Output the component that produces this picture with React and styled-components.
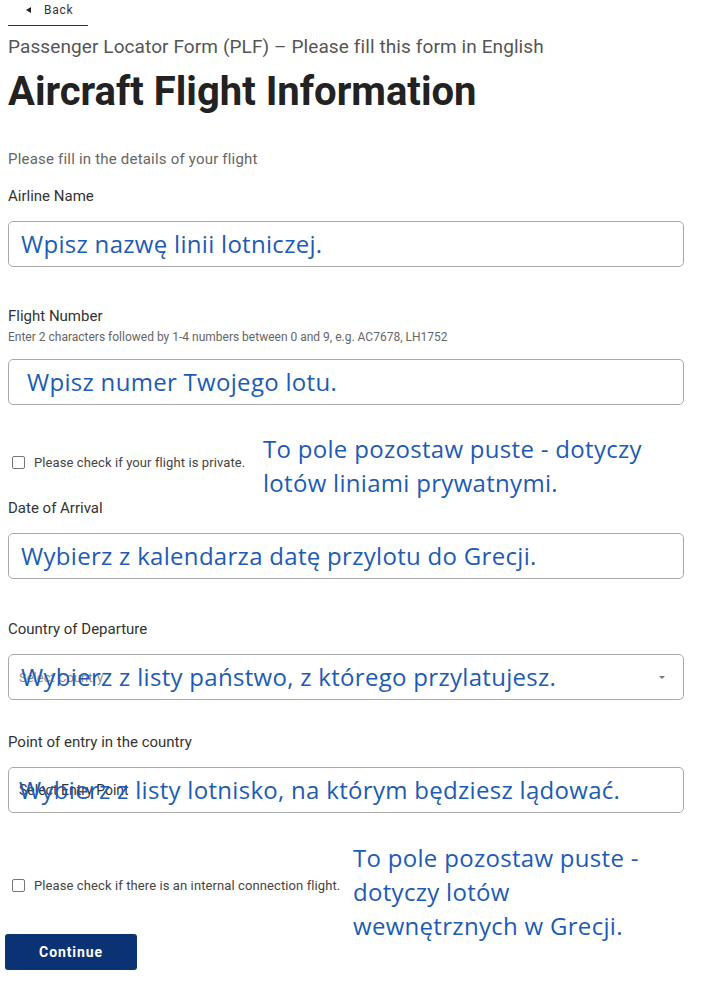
import styled, { createGlobalStyle } from "styled-components";

const GlobalStyle = createGlobalStyle`
  html, body {
    margin: 0;
    padding: 0;
    background: #ffffff;
  }
  body {
    font-family: Roboto, "Liberation Sans", sans-serif;
    color: #333333;
  }
`;

const Page = styled.div`
  width: 676px;
  padding: 0 8px 28px;
`;

const BackLink = styled.a`
  display: flex;
  align-items: center;
  gap: 13px;
  width: 80px;
  height: 26px;
  box-sizing: border-box;
  padding: 0 0 6px 18px;
  border-bottom: 1px solid #333;
  font-size: 12px;
  letter-spacing: 0.7px;
  color: #333;
  text-decoration: none;
`;

const Arrow = styled.span`
  width: 0;
  height: 0;
  border-top: 3.5px solid transparent;
  border-bottom: 3.5px solid transparent;
  border-right: 5px solid #222;
`;

const Subtitle = styled.p`
  margin: 9px 0 0;
  font-size: 19px;
  line-height: 24px;
  letter-spacing: 0.1px;
  color: #555;
`;

const Title = styled.h1`
  margin: 9px 0 0;
  font-size: 40px;
  line-height: 48px;
  font-weight: 700;
  color: #222;
`;

const Intro = styled.p`
  margin: 33px 0 0;
  font-size: 15px;
  line-height: 20px;
  letter-spacing: 0.2px;
  color: #666;
`;

const Field = styled.div`
  margin-top: ${(p) => p.$gap}px;
`;

const Label = styled.div`
  font-size: 15px;
  line-height: 20px;
  font-weight: 400;
  color: #333;
`;

const Hint = styled.div`
  margin-top: 4px;
  font-size: 12px;
  line-height: 14px;
  color: #666;
`;

const InputBox = styled.div`
  position: relative;
  margin-top: 15px;
  height: 46px;
  box-sizing: border-box;
  border: 1px solid #a9a9a9;
  border-radius: 5px;
  display: flex;
  align-items: center;
  padding: 0 10px;
`;

const Placeholder = styled.span`
  font-size: ${(p) => p.$size}px;
  color: ${(p) => p.$color};
`;

const Caret = styled.span`
  margin-left: auto;
  margin-right: 8px;
  width: 0;
  height: 0;
  border-left: 3.5px solid transparent;
  border-right: 3.5px solid transparent;
  border-top: 3.5px solid #777;
`;

const Note = styled.div`
  position: absolute;
  left: ${(p) => p.$left}px;
  top: ${(p) => p.$top}px;
  font-family: "Open Sans", "Noto Sans", sans-serif;
  font-size: 24px;
  line-height: 34px;
  letter-spacing: 0.3px;
  color: #1d5bb5;
  white-space: nowrap;
`;

const InlineNote = styled(Note)`
  top: 50%;
  transform: translateY(-50%);
`;

const CheckRow = styled.label`
  position: relative;
  display: flex;
  align-items: center;
  gap: 9px;
  height: 20px;
  margin-top: ${(p) => p.$gap}px;
  padding-left: 4px;
  font-size: 13px;
  letter-spacing: 0.1px;
  color: #444;
`;

const Box = styled.span`
  width: 13px;
  height: 13px;
  box-sizing: border-box;
  border: 1px solid #767676;
  border-radius: 2px;
  background: #fff;
`;

const Button = styled.button`
  margin: 39px 0 0 -3px;
  width: 132px;
  height: 36px;
  border: none;
  border-radius: 3px;
  background: #0b3273;
  color: #fff;
  font-family: Roboto, "Liberation Sans", sans-serif;
  font-size: 14px;
  font-weight: 700;
  letter-spacing: 0.9px;
`;

export default function App() {
  return (
    <>
      <GlobalStyle />
      <Page>
        <BackLink href="#">
          <Arrow />
          Back
        </BackLink>
        <Subtitle>Passenger Locator Form (PLF) – Please fill this form in English</Subtitle>
        <Title>Aircraft Flight Information</Title>
        <Intro>Please fill in the details of your flight</Intro>

        <Field $gap={17}>
          <Label>Airline Name</Label>
          <InputBox>
            <InlineNote $left={12}>Wpisz nazwę linii lotniczej.</InlineNote>
          </InputBox>
        </Field>

        <Field $gap={39}>
          <Label>Flight Number</Label>
          <Hint>Enter 2 characters followed by 1-4 numbers between 0 and 9, e.g. AC7678, LH1752</Hint>
          <InputBox>
            <InlineNote $left={18}>Wpisz numer Twojego lotu.</InlineNote>
          </InputBox>
        </Field>

        <CheckRow $gap={47}>
          <Box />
          Please check if your flight is private.
          <Note $left={255} $top={-20}>
            To pole pozostaw puste - dotyczy
            <br />
            lotów liniami prywatnymi.
          </Note>
        </CheckRow>

        <Field $gap={26}>
          <Label>Date of Arrival</Label>
          <InputBox>
            <InlineNote $left={12}>Wybierz z kalendarza datę przylotu do Grecji.</InlineNote>
          </InputBox>
        </Field>

        <Field $gap={40}>
          <Label>Country of Departure</Label>
          <InputBox>
            <Placeholder $size={13} $color="#8a8a8a">Select Country</Placeholder>
            <Caret />
            <InlineNote $left={12}>Wybierz z listy państwo, z którego przylatujesz.</InlineNote>
          </InputBox>
        </Field>

        <Field $gap={32}>
          <Label>Point of entry in the country</Label>
          <InputBox>
            <Placeholder $size={14} $color="#333">Select Entry Point</Placeholder>
            <InlineNote $left={10}>Wybierz z listy lotnisko, na którym będziesz lądować.</InlineNote>
          </InputBox>
        </Field>

        <CheckRow $gap={62}>
          <Box />
          Please check if there is an internal connection flight.
          <Note $left={345} $top={-34}>
            To pole pozostaw puste -
            <br />
            dotyczy lotów
            <br />
            wewnętrznych w Grecji.
          </Note>
        </CheckRow>

        <Button>Continue</Button>
      </Page>
    </>
  );
}
